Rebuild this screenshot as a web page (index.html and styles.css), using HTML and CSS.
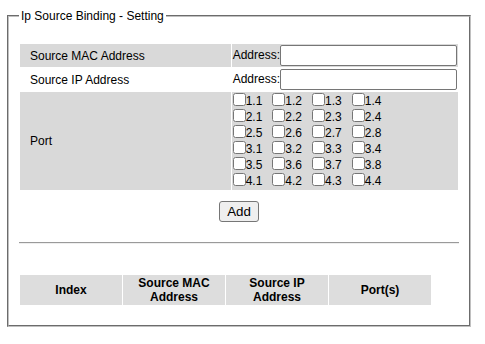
FILE: index.html
```html
<!DOCTYPE html>
<html lang="en">

<head>
    <meta charset="UTF-8">
    <title>Ip Source Binding</title>
    <link rel="stylesheet" href="styles.css">
</head>

<body>
    <fieldset class="panel">
        <legend>Ip Source Binding - Setting</legend>

        <table class="setting">
            <tr class="shade">
                <td class="label">Source MAC Address</td>
                <td class="field">Address:<input type="text" class="addr"></td>
            </tr>
            <tr>
                <td class="label">Source IP Address</td>
                <td class="field">Address:<input type="text" class="addr"></td>
            </tr>
            <tr class="shade">
                <td class="label">Port</td>
                <td class="field">
                    <div class="ports" id="ports"></div>
                </td>
            </tr>
        </table>

        <div class="actions">
            <button class="btn">Add</button>
        </div>

        <hr class="divider">

        <table class="list">
            <tr>
                <th>Index</th>
                <th>Source MAC<br>Address</th>
                <th>Source IP<br>Address</th>
                <th>Port(s)</th>
            </tr>
        </table>
    </fieldset>

    <script>
        const ports = document.getElementById('ports');
        const names = ['1.1', '1.2', '1.3', '1.4', '2.1', '2.2', '2.3', '2.4',
            '2.5', '2.6', '2.7', '2.8', '3.1', '3.2', '3.3', '3.4',
            '3.5', '3.6', '3.7', '3.8', '4.1', '4.2', '4.3', '4.4'];

        names.forEach(name => {
            const item = document.createElement('label');
            item.className = 'port';
            item.innerHTML = '<input type="checkbox" value="' + name + '">' + name;
            ports.appendChild(item);
        });
    </script>
</body>

</html>
```

FILE: styles.css
```css
body {
    margin: 0;
    font-family: "Liberation Sans", Arial, sans-serif;
    font-size: 12px;
    color: #000;
    background: #fff;
}

.panel {
    margin: 9px 14px 0 7px;
    padding: 20px 10px 19px;
    border: 2px groove #c0c0c0;
}

.panel legend {
    padding: 0 2px;
    font-size: 12px;
}

.setting {
    width: 100%;
    border-spacing: 1px;
}

.setting td {
    padding: 1px;
}

.setting .label {
    width: 191px;
    padding: 0 10px;
}

.shade td {
    background-color: #d9d9d9;
}

.field {
    white-space: nowrap;
}

.addr {
    box-sizing: border-box;
    width: 177px;
    height: 21px;
    margin: 0;
    padding: 1px 2px;
    border: 1px solid #767676;
    border-radius: 2px;
    vertical-align: middle;
    font-family: "Liberation Sans", Arial, sans-serif;
    font-size: 13px;
}

.ports {
    display: grid;
    grid-template-columns: repeat(4, 39.7px);
}

.port {
    line-height: 16px;
    white-space: nowrap;
}

.port input {
    width: 13px;
    height: 13px;
    margin: 0;
    vertical-align: -1px;
}

.actions {
    margin-top: 10px;
    text-align: center;
}

.btn {
    height: 21px;
    padding: 1px 7px;
    font-family: "Liberation Sans", Arial, sans-serif;
    font-size: 13.33px;
    background-color: #efefef;
    border: 1px solid #767676;
    border-radius: 3px;
    color: #000;
}

.divider {
    height: 0;
    margin: 20px 0 0;
    border: 0;
    border-top: 1px solid #9a9a9a;
    border-bottom: 1px solid #eeeeee;
}

.list {
    margin-top: 30px;
    border-spacing: 1px;
}

.list th {
    width: 100px;
    height: 28px;
    padding: 1px;
    background-color: #dddddd;
    font-size: 12px;
    font-weight: bold;
    text-align: center;
}
```
